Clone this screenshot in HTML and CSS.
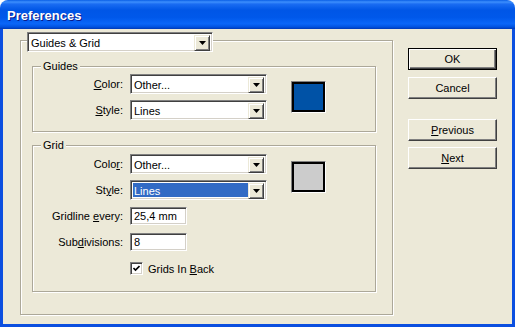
FILE: index.html
```html
<!DOCTYPE html>
<html lang="en">
<head>
  <meta charset="UTF-8">
  <title>Preferences</title>
  <link rel="stylesheet" href="styles.css">
</head>
<body>
  <div class="window">
    <div class="titlebar">Preferences</div>

    <div class="frame">
      <!-- main panel -->
      <div class="group main">
        <div class="select title-select">
          <span class="select-value">Guides &amp; Grid</span>
          <span class="select-btn"><svg width="7" height="4" viewBox="0 0 7 4"><path d="M0 0h7L3.5 4z" fill="#000"/></svg></span>
        </div>

        <!-- Guides -->
        <div class="group sub guides">
          <div class="legend">Guides</div>
          <div class="rows">
            <div class="fields">
              <div class="field-row">
                <label class="label"><u>C</u>olor:</label>
                <div class="select">
                  <span class="select-value">Other...</span>
                  <span class="select-btn"><svg width="7" height="4" viewBox="0 0 7 4"><path d="M0 0h7L3.5 4z" fill="#000"/></svg></span>
                </div>
              </div>
              <div class="field-row">
                <label class="label"><u>S</u>tyle:</label>
                <div class="select">
                  <span class="select-value">Lines</span>
                  <span class="select-btn"><svg width="7" height="4" viewBox="0 0 7 4"><path d="M0 0h7L3.5 4z" fill="#000"/></svg></span>
                </div>
              </div>
            </div>
            <div class="swatch swatch-blue"></div>
          </div>
        </div>

        <!-- Grid -->
        <div class="group sub grid">
          <div class="legend">Grid</div>
          <div class="rows">
            <div class="fields">
              <div class="field-row">
                <label class="label">Colo<u>r</u>:</label>
                <div class="select">
                  <span class="select-value">Other...</span>
                  <span class="select-btn"><svg width="7" height="4" viewBox="0 0 7 4"><path d="M0 0h7L3.5 4z" fill="#000"/></svg></span>
                </div>
              </div>
              <div class="field-row">
                <label class="label">St<u>y</u>le:</label>
                <div class="select">
                  <span class="select-value selected">Lines</span>
                  <span class="select-btn"><svg width="7" height="4" viewBox="0 0 7 4"><path d="M0 0h7L3.5 4z" fill="#000"/></svg></span>
                </div>
              </div>
            </div>
            <div class="swatch swatch-gray"></div>
          </div>

          <div class="field-row input-row first-input">
            <label class="label">Gridline <u>e</u>very:</label>
            <div class="input">25,4 mm</div>
          </div>
          <div class="field-row input-row">
            <label class="label">Sub<u>d</u>ivisions:</label>
            <div class="input">8</div>
          </div>
          <div class="check-row">
            <span class="checkbox"><svg width="7" height="7" viewBox="0 0 7 7"><path d="M0.5 3l2 2 4-4" fill="none" stroke="#000" stroke-width="1.6"/></svg></span>
            <span>Grids In <u>B</u>ack</span>
          </div>
        </div>
      </div>

      <!-- buttons -->
      <div class="buttons">
        <button class="btn default">OK</button>
        <button class="btn cancel">Cancel</button>
        <button class="btn prev"><u>P</u>revious</button>
        <button class="btn next"><u>N</u>ext</button>
      </div>
    </div>
  </div>
</body>
</html>
```

FILE: styles.css
```css
* {
  box-sizing: border-box;
}
body {
  margin: 0;
  background: #fff;
  font-family: "Liberation Sans", Arial, sans-serif;
  font-size: 11px;
  color: #000;
}
.window {
  width: 515px;
  height: 327px;
  display: flex;
  flex-direction: column;
  border-radius: 8px 8px 0 0;
  overflow: hidden;
}
.titlebar {
  flex: none;
  height: 29px;
  padding: 3px 0 0 7px;
  line-height: 26px;
  font-size: 13px;
  font-weight: bold;
  color: #fff;
  text-shadow: 1px 1px 0 #0a1a8a;
  background: linear-gradient(to bottom, #0a5fe6 0%, #3d8ffd 7%, #1a6cf2 14%, #0056e6 35%, #0058ea 60%, #0a66f8 82%, #0052e0 93%, #0038b4 100%);
}
.frame {
  flex: 1;
  display: flex;
  align-items: flex-start;
  background: #ece9d8;
  border: 3px solid #0b4fe0;
  border-top: 0;
  padding: 11px 0 0 17px;
}

/* etched group boxes */
.group {
  border: 1px solid #aca899;
  box-shadow: 1px 1px 0 #fff, inset 1px 1px 0 #fff;
}
.main {
  width: 373px;
  padding-bottom: 22px;
}
.sub {
  margin: 14px 16px 0 11px;
}
.guides {
  padding-bottom: 11px;
}
.grid {
  margin-top: 13px;
  padding-bottom: 16px;
}
.legend {
  width: fit-content;
  margin: -7px 0 0 8px;
  padding: 0 2px;
  line-height: 13px;
  background: #ece9d8;
}
.rows {
  display: flex;
  align-items: center;
  margin-top: 1px;
}
.grid .rows {
  margin-top: 2px;
}

.field-row {
  display: flex;
  align-items: center;
  height: 20px;
}
.field-row + .field-row {
  margin-top: 6px;
}
.label {
  width: 90px;
  margin-right: 7px;
  text-align: right;
  white-space: nowrap;
}
.input-row {
  height: 18px;
}
.first-input {
  margin-top: 7px;
}
.field-row.input-row + .field-row.input-row {
  margin-top: 8px;
}

/* sunken fields */
.select,
.input,
.checkbox {
  border: 1px solid;
  border-color: #808080 #fff #fff #808080;
  box-shadow: inset 1px 1px 0 #404040, inset -1px -1px 0 #d4d0c8;
  background: #fff;
}
.select {
  display: flex;
  width: 137px;
  height: 20px;
  padding: 2px;
}
.title-select {
  width: 186px;
  margin: -9px 0 0 6px;
}
.select-value {
  flex: 1;
  padding-left: 1px;
  line-height: 16px;
  white-space: nowrap;
}
.select-value.selected {
  background: #316ac5;
  color: #fff;
}
.select-btn {
  flex: none;
  width: 16px;
  height: 16px;
  display: flex;
  align-items: center;
  justify-content: center;
  background: #ece9d8;
  border: 1px solid;
  border-color: #ece9d8 #404040 #404040 #ece9d8;
  box-shadow: inset 1px 1px 0 #fff, inset -1px -1px 0 #808080;
}
.input {
  width: 57px;
  height: 18px;
  padding: 0 3px;
  line-height: 16px;
}

.swatch {
  width: 35px;
  height: 32px;
  margin-left: 24px;
  border: 1px solid;
  border-color: #808080 #fff #fff #808080;
  box-shadow: inset 0 0 0 2px #000;
}
.swatch-blue {
  background: #0052a6;
}
.swatch-gray {
  background: #cccccc;
}

.check-row {
  display: flex;
  align-items: center;
  gap: 5px;
  height: 13px;
  margin: 11px 0 0 97px;
}
.checkbox {
  width: 13px;
  height: 13px;
  display: flex;
  align-items: center;
  justify-content: center;
}

/* buttons */
.buttons {
  display: flex;
  flex-direction: column;
  margin-left: 15px;
  padding-top: 8px;
}
.btn {
  width: 89px;
  height: 22px;
  padding: 0;
  font: inherit;
  color: #000;
  background: #ece9d8;
  border: 1px solid;
  border-color: #fff #404040 #404040 #fff;
  box-shadow: inset -1px -1px 0 #808080;
}
.btn.default {
  border-color: #000;
  box-shadow: inset 1px 1px 0 #fff, inset -1px -1px 0 #404040, inset -2px -2px 0 #808080;
}
.cancel {
  margin-top: 7px;
}
.prev {
  margin-top: 20px;
}
.next {
  margin-top: 6px;
}
```
